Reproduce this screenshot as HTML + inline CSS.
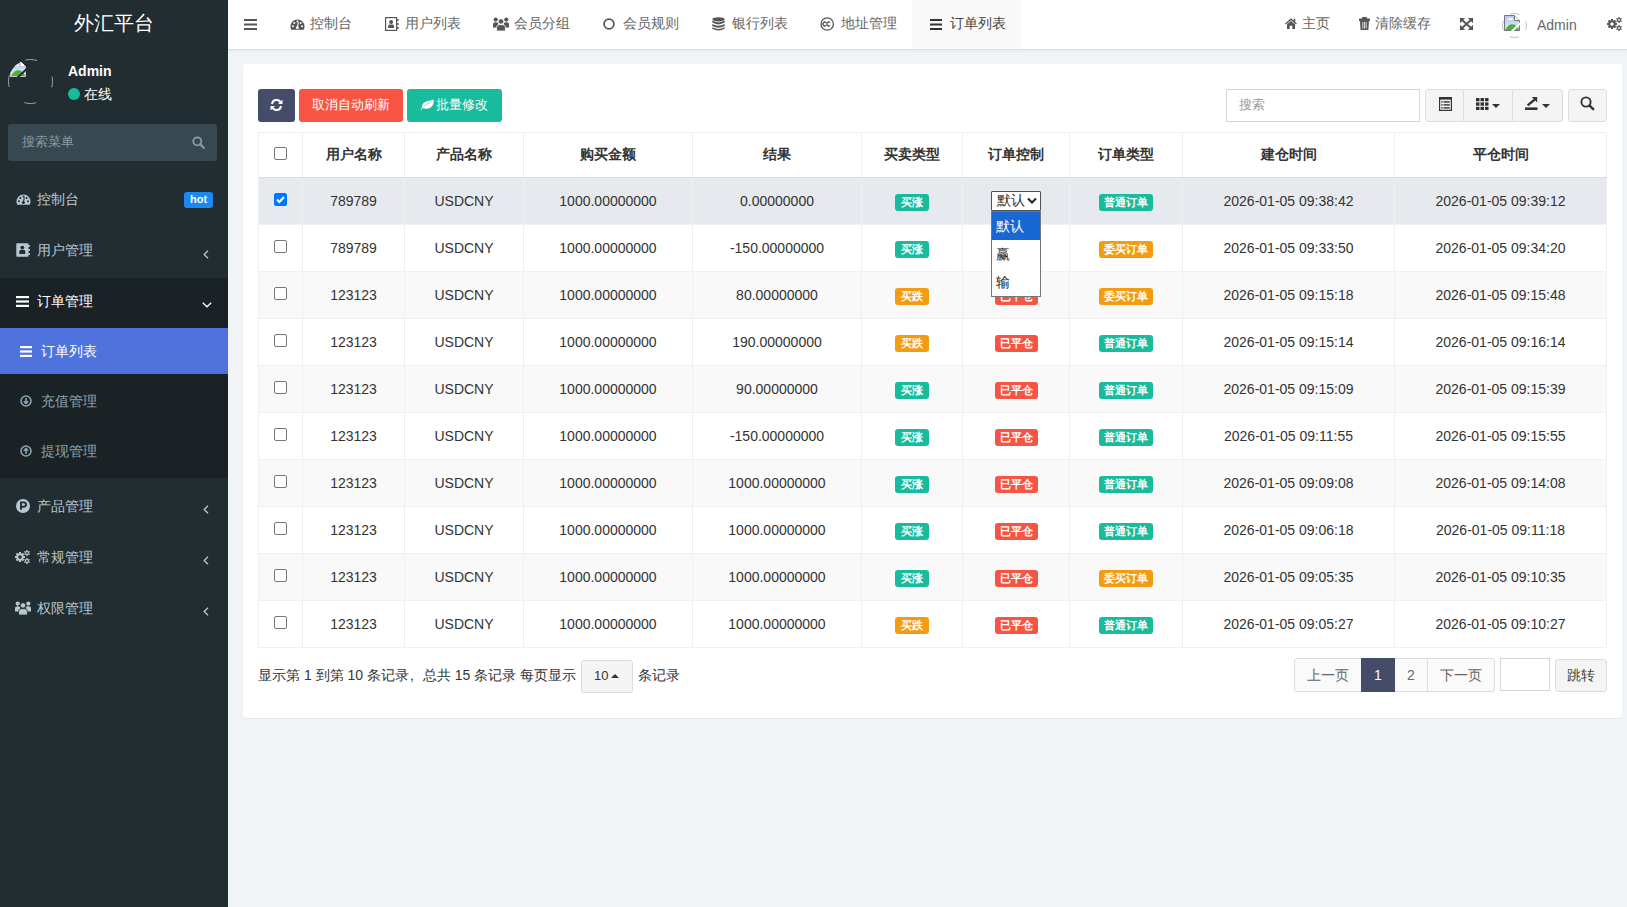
<!DOCTYPE html>
<html><head><meta charset="utf-8">
<style>
*{box-sizing:border-box;margin:0;padding:0}
html,body{width:1627px;height:907px;overflow:hidden}
body{font-family:"Liberation Sans",sans-serif;font-size:14px;color:#333;background:#f1f4f6;position:relative}
.abs{position:absolute}
svg{display:block}
#side{position:absolute;left:0;top:0;width:228px;height:907px;background:#222d32}
#logo{position:absolute;left:0;top:0;width:228px;height:50px;color:#fff;font-size:20px;text-align:center;line-height:46px}
.mi{position:absolute;left:0;width:228px;color:#b8c7ce;font-size:14px}
.ic{position:absolute}
.tx{position:absolute;white-space:nowrap;line-height:20px}
#nav{position:absolute;left:228px;top:0;width:1399px;height:50px;background:#fff;box-shadow:0 1px 3px rgba(0,0,0,.05);border-bottom:1px solid #dcdfe2}
.nt{position:absolute;top:13px;line-height:20px;color:#666;font-size:14px;white-space:nowrap}
#panel{position:absolute;left:243px;top:64px;width:1379px;height:654px;background:#fff;border-radius:3px;box-shadow:0 1px 1px rgba(0,0,0,.05)}
.btn{position:absolute;top:89px;height:33px;border-radius:3px;color:#fff;font-size:13px;line-height:32px;text-align:center;white-space:nowrap}
table{position:absolute;left:258px;top:132px;width:1348px;border-collapse:collapse;table-layout:fixed}
th,td{border:1px solid #f0f0f0;text-align:center;vertical-align:middle;padding:0;white-space:nowrap;color:#333}
th{height:45px;font-weight:bold;border-bottom:1px solid #dcdcdc}
td{height:47px}
tr.sel td{background:#e6e9ed}
tr.odd td{background:#f9f9f9}
.cb{display:inline-block;width:13px;height:13px;border:1px solid #767676;border-radius:2px;background:#fff;vertical-align:middle;position:relative;top:-3px}
.cb.on{background:#0075ff;border-color:#0075ff}
.cb.on svg{position:absolute;left:-1px;top:-1px}
.lb{display:inline-block;height:17px;line-height:17px;border-radius:3px;color:#fff;font-size:11px;font-weight:bold;padding:0 5px;vertical-align:middle;position:relative;top:1px}
.lb.w2{padding:0 6px}
.g{background:#18bc9c}.o{background:#f39c12}.r{background:#f75444}
.selbox{display:inline-block;position:relative;width:50px;height:20px;border:1px solid #4f4f4f;border-radius:1px;background:#fff;text-align:left;padding-left:5px;line-height:16px;font-size:14px;color:#333;vertical-align:middle}
.chev{position:absolute;right:3px;top:5px}
.dd{position:absolute;left:991px;top:211px;width:50px;height:86px;border:1px solid #767676;background:#fff;font-size:14px}
.dd div{height:28px;line-height:28px;padding-left:4px;color:#222}
.dd .hl{background:#1967d2;color:#fff}
.ft{position:absolute;line-height:20px;font-size:14px;color:#333;white-space:nowrap}
.pg{position:absolute;top:658px;height:34px;border:1px solid #ddd;background:#fafafa;color:#666;font-size:14px;line-height:32px;text-align:center}
</style></head><body>
<div id="side">
<div id="logo">外汇平台</div>
<svg class="abs" style="left:8px;top:59px" width="45" height="45" viewBox="0 0 45 45"><circle cx="22.5" cy="22.5" r="22" fill="none" stroke="#9aa3a7" stroke-width="1" stroke-dasharray="12 22.56" stroke-dashoffset="6"/></svg>
<svg class="abs" style="left:10px;top:61px" width="16" height="16" viewBox="0 0 16 16"><defs><linearGradient id="skg" x1="0" y1="0" x2="0" y2="1"><stop offset="0" stop-color="#b3c9ef"/><stop offset="1" stop-color="#e4ebf7"/></linearGradient><clipPath id="cl1"><circle cx="20.5" cy="20.5" r="22"/></clipPath></defs><g clip-path="url(#cl1)"><path d="M0.5 0.5 H10.5 L15.5 5.5 V15.5 H0.5 Z" fill="url(#skg)" stroke="#c9c9c9" stroke-width="1"/><path d="M10.5 0.5 V5.5 H15.5" fill="#fff" stroke="#c9c9c9" stroke-width="1"/><path d="M3 4.8 Q3.2 3.2 5 3.4 Q6 2.2 7.5 3.2 Q9 3.3 9 4.8 Z" fill="#fff"/><path d="M1 15 Q4.5 8.5 9 9.3 Q13 10 15 14.5 L15 15 Z" fill="#4cb03a"/><path d="M6.2 16.5 L16.5 6.8 L16.5 9.6 L9.2 16.5 Z" fill="#222d32"/></g></svg>
<div class="tx" style="left:68px;top:61px;color:#fff;font-weight:bold">Admin</div>
<div class="abs" style="left:68px;top:88px;width:12px;height:12px;border-radius:50%;background:#18bc9c"></div>
<div class="tx" style="left:84px;top:84px;color:#fff">在线</div>
<div class="abs" style="left:8px;top:124px;width:209px;height:37px;background:#374850;border-radius:3px"></div>
<div class="tx" style="left:22px;top:132px;color:#8b9aa1;font-size:13px">搜索菜单</div>
<svg class="abs" style="left:192px;top:136px" width="13" height="13" viewBox="0 0 13 13"><circle cx="5.3" cy="5.3" r="4" fill="none" stroke="#8b9aa1" stroke-width="1.8"/><path d="M8.2 8.2 L11.8 11.8" stroke="#8b9aa1" stroke-width="2.2" stroke-linecap="round"/></svg>

<!-- 控制台 -->
<svg class="ic" style="left:16px;top:194px" width="15" height="11" viewBox="0 0 15 11"><path d="M7.5 0.5 A7 7 0 0 0 0.5 7.5 Q0.5 9.5 1.3 10.8 L13.7 10.8 Q14.5 9.5 14.5 7.5 A7 7 0 0 0 7.5 0.5 Z" fill="#b8c7ce"/><g fill="#222d32"><circle cx="3" cy="7.3" r="1"/><circle cx="4.3" cy="3.9" r="1"/><circle cx="7.5" cy="2.4" r="1"/><circle cx="10.7" cy="3.9" r="1"/><circle cx="12" cy="7.3" r="1"/><circle cx="7.4" cy="8.6" r="1.5"/></g><path d="M7.3 8.5 L8.4 3.4" stroke="#222d32" stroke-width="1.1"/></svg>
<div class="tx mi" style="left:37px;top:189px;width:auto">控制台</div>
<div class="abs" style="left:184px;top:192px;width:29px;height:16px;background:#1a88ef;border-radius:3px;color:#fff;font-size:11px;font-weight:bold;text-align:center;line-height:14px">hot</div>

<!-- 用户管理 -->
<svg class="ic" style="left:16px;top:243px" width="14" height="14" viewBox="0 0 14 14"><rect x="0.3" y="0.3" width="12.2" height="13.4" rx="0.8" fill="#b8c7ce"/><g fill="#b8c7ce"><rect x="12" y="2" width="2" height="1.8"/><rect x="12" y="6.1" width="2" height="1.8"/><rect x="12" y="10.2" width="2" height="1.8"/></g><circle cx="6.3" cy="4.6" r="1.9" fill="#222d32"/><path d="M3.3 11 L3.3 8.4 Q3.3 7 4.8 7 L7.8 7 Q9.3 7 9.3 8.4 L9.3 11 Z" fill="#222d32"/></svg>
<div class="tx mi" style="left:37px;top:240px;width:auto">用户管理</div>
<svg class="ic" style="left:203px;top:250px" width="6" height="9" viewBox="0 0 6 9"><path d="M5 0.8 L1.2 4.5 L5 8.2" fill="none" stroke="#b8c7ce" stroke-width="1.3"/></svg>

<!-- 订单管理 -->
<div class="abs" style="left:0;top:278px;width:228px;height:200px;background:#1a2226"></div>
<svg class="ic" style="left:16px;top:296px" width="13" height="11" viewBox="0 0 13 11"><rect y="0" width="13" height="2.2" fill="#fff"/><rect y="4.4" width="13" height="2.2" fill="#fff"/><rect y="8.8" width="13" height="2.2" fill="#fff"/></svg>
<div class="tx mi" style="left:37px;top:291px;width:auto;color:#fff">订单管理</div>
<svg class="ic" style="left:202px;top:302px" width="10" height="6" viewBox="0 0 10 6"><path d="M0.8 0.8 L5 4.8 L9.2 0.8" fill="none" stroke="#fff" stroke-width="1.3"/></svg>

<div class="abs" style="left:0;top:328px;width:228px;height:46px;background:#4f73dc"></div>
<svg class="ic" style="left:20px;top:346px" width="12" height="11" viewBox="0 0 12 11"><rect y="0" width="12" height="2.2" fill="#fff"/><rect y="4.4" width="12" height="2.2" fill="#fff"/><rect y="8.8" width="12" height="2.2" fill="#fff"/></svg>
<div class="tx mi" style="left:41px;top:341px;width:auto;color:#fff">订单列表</div>

<svg class="ic" style="left:20px;top:395px" width="12" height="12" viewBox="0 0 12 12"><circle cx="6" cy="6" r="5" fill="none" stroke="#8aa4af" stroke-width="1.6"/><path d="M6 3 L6 8.5 M3.8 6.3 L6 8.6 L8.2 6.3" fill="none" stroke="#8aa4af" stroke-width="1.6"/></svg>
<div class="tx mi" style="left:41px;top:391px;width:auto;color:#8aa4af">充值管理</div>
<svg class="ic" style="left:20px;top:445px" width="12" height="12" viewBox="0 0 12 12"><circle cx="6" cy="6" r="5" fill="none" stroke="#8aa4af" stroke-width="1.6"/><path d="M6 9 L6 3.5 M3.8 5.7 L6 3.4 L8.2 5.7" fill="none" stroke="#8aa4af" stroke-width="1.6"/></svg>
<div class="tx mi" style="left:41px;top:441px;width:auto;color:#8aa4af">提现管理</div>

<!-- 产品管理 -->
<svg class="ic" style="left:16px;top:499px" width="14" height="14" viewBox="0 0 14 14"><circle cx="7" cy="7" r="7" fill="#b8c7ce"/><path d="M5 10.8 L5 3.4 L7.6 3.4 Q10 3.4 10 5.6 Q10 7.8 7.6 7.8 L5 7.8" fill="none" stroke="#222d32" stroke-width="1.9"/></svg>
<div class="tx mi" style="left:37px;top:496px;width:auto">产品管理</div>
<svg class="ic" style="left:203px;top:505px" width="6" height="9" viewBox="0 0 6 9"><path d="M5 0.8 L1.2 4.5 L5 8.2" fill="none" stroke="#b8c7ce" stroke-width="1.3"/></svg>

<!-- 常规管理 -->
<svg class="ic" style="left:15px;top:550px" width="16" height="15" viewBox="0 0 16 15"><circle cx="5.00" cy="7.00" r="3.70" fill="#b8c7ce"/><rect x="4.00" y="2.00" width="2.00" height="10.00" fill="#b8c7ce" transform="rotate(0.0 5.00 7.00)"/><rect x="4.00" y="2.00" width="2.00" height="10.00" fill="#b8c7ce" transform="rotate(45.0 5.00 7.00)"/><rect x="4.00" y="2.00" width="2.00" height="10.00" fill="#b8c7ce" transform="rotate(90.0 5.00 7.00)"/><rect x="4.00" y="2.00" width="2.00" height="10.00" fill="#b8c7ce" transform="rotate(135.0 5.00 7.00)"/><circle cx="5.00" cy="7.00" r="1.80" fill="#222d32"/><circle cx="12.00" cy="3.00" r="1.90" fill="#b8c7ce"/><rect x="11.35" y="-0.10" width="1.30" height="6.20" fill="#b8c7ce" transform="rotate(0.0 12.00 3.00)"/><rect x="11.35" y="-0.10" width="1.30" height="6.20" fill="#b8c7ce" transform="rotate(60.0 12.00 3.00)"/><rect x="11.35" y="-0.10" width="1.30" height="6.20" fill="#b8c7ce" transform="rotate(120.0 12.00 3.00)"/><circle cx="12.00" cy="3.00" r="0.90" fill="#222d32"/><circle cx="12.00" cy="11.00" r="1.90" fill="#b8c7ce"/><rect x="11.35" y="7.90" width="1.30" height="6.20" fill="#b8c7ce" transform="rotate(0.0 12.00 11.00)"/><rect x="11.35" y="7.90" width="1.30" height="6.20" fill="#b8c7ce" transform="rotate(60.0 12.00 11.00)"/><rect x="11.35" y="7.90" width="1.30" height="6.20" fill="#b8c7ce" transform="rotate(120.0 12.00 11.00)"/><circle cx="12.00" cy="11.00" r="0.90" fill="#222d32"/></svg>
<div class="tx mi" style="left:37px;top:547px;width:auto">常规管理</div>
<svg class="ic" style="left:203px;top:556px" width="6" height="9" viewBox="0 0 6 9"><path d="M5 0.8 L1.2 4.5 L5 8.2" fill="none" stroke="#b8c7ce" stroke-width="1.3"/></svg>

<!-- 权限管理 -->
<svg class="ic" style="left:15px;top:601px" width="16" height="14" viewBox="0 0 16 14"><g fill="#b8c7ce"><circle cx="2.7" cy="2.6" r="2.1"/><circle cx="13.3" cy="2.6" r="2.1"/><path d="M0 10.5 L0 7.6 Q0 5.3 2.7 5.3 Q4.3 5.3 5.2 6.3 L5.2 10.5 Z"/><path d="M16 10.5 L16 7.6 Q16 5.3 13.3 5.3 Q11.7 5.3 10.8 6.3 L10.8 10.5 Z"/><circle cx="8" cy="4.4" r="2.7" stroke="#222d32" stroke-width=".8"/><path d="M3.6 14 L3.6 10.4 Q3.6 7.7 6.3 7.7 L9.7 7.7 Q12.4 7.7 12.4 10.4 L12.4 14 Z" stroke="#222d32" stroke-width=".8"/></g></svg>
<div class="tx mi" style="left:37px;top:598px;width:auto">权限管理</div>
<svg class="ic" style="left:203px;top:607px" width="6" height="9" viewBox="0 0 6 9"><path d="M5 0.8 L1.2 4.5 L5 8.2" fill="none" stroke="#b8c7ce" stroke-width="1.3"/></svg>
</div>
<div id="nav"></div>
<div class="abs" style="left:912px;top:0;width:109px;height:49px;background:#f9f9f9"></div>
<!-- hamburger -->
<svg class="abs" style="left:244px;top:19px" width="13" height="11" viewBox="0 0 13 11"><g fill="#555"><rect width="13" height="2"/><rect y="4.5" width="13" height="2"/><rect y="9" width="13" height="2"/></g></svg>
<!-- 控制台 -->
<svg class="abs" style="left:290px;top:19px" width="15" height="11" viewBox="0 0 15 11"><path d="M7.5 0.5 A7 7 0 0 0 0.5 7.5 Q0.5 9.5 1.3 10.8 L13.7 10.8 Q14.5 9.5 14.5 7.5 A7 7 0 0 0 7.5 0.5 Z" fill="#555"/><g fill="#fff"><circle cx="3" cy="7.3" r="1"/><circle cx="4.3" cy="3.9" r="1"/><circle cx="7.5" cy="2.4" r="1"/><circle cx="10.7" cy="3.9" r="1"/><circle cx="12" cy="7.3" r="1"/><circle cx="7.4" cy="8.6" r="1.5"/></g><path d="M7.3 8.5 L8.4 3.4" stroke="#fff" stroke-width="1.1"/></svg>
<div class="nt" style="left:310px">控制台</div>
<!-- 用户列表 -->
<svg class="abs" style="left:385px;top:17px" width="14" height="14" viewBox="0 0 14 14"><rect x="0.6" y="0.6" width="11" height="12.8" fill="none" stroke="#555" stroke-width="1.2"/><g fill="#555"><rect x="11.6" y="2.2" width="2" height="1.8"/><rect x="11.6" y="6.1" width="2" height="1.8"/><rect x="11.6" y="10" width="2" height="1.8"/></g><circle cx="6.1" cy="4.9" r="2" fill="#555"/><path d="M3.1 11 L3.1 9 Q3.1 7.4 4.6 7.4 L7.6 7.4 Q9.1 7.4 9.1 9 L9.1 11 Z" fill="#555"/></svg>
<div class="nt" style="left:405px">用户列表</div>
<!-- 会员分组 -->
<svg class="abs" style="left:493px;top:17px" width="16" height="14" viewBox="0 0 16 14"><g fill="#555"><circle cx="2.7" cy="2.6" r="2.1"/><circle cx="13.3" cy="2.6" r="2.1"/><path d="M0 10.5 L0 7.6 Q0 5.3 2.7 5.3 Q4.3 5.3 5.2 6.3 L5.2 10.5 Z"/><path d="M16 10.5 L16 7.6 Q16 5.3 13.3 5.3 Q11.7 5.3 10.8 6.3 L10.8 10.5 Z"/><circle cx="8" cy="4.4" r="2.7" stroke="#fff" stroke-width=".8"/><path d="M3.6 14 L3.6 10.4 Q3.6 7.7 6.3 7.7 L9.7 7.7 Q12.4 7.7 12.4 10.4 L12.4 14 Z" stroke="#fff" stroke-width=".8"/></g></svg>
<div class="nt" style="left:514px">会员分组</div>
<!-- 会员规则 -->
<svg class="abs" style="left:603px;top:18px" width="12" height="12" viewBox="0 0 12 12"><circle cx="6" cy="6" r="4.9" fill="none" stroke="#555" stroke-width="1.8"/></svg>
<div class="nt" style="left:623px">会员规则</div>
<!-- 银行列表 -->
<svg class="abs" style="left:712px;top:17px" width="13" height="14" viewBox="0 0 13 14"><g fill="#555"><ellipse cx="6.5" cy="2.3" rx="6.2" ry="2.1"/><path d="M0.3 3.6 Q6.5 7.2 12.7 3.6 L12.7 5.6 Q6.5 9.2 0.3 5.6 Z"/><path d="M0.3 6.9 Q6.5 10.5 12.7 6.9 L12.7 8.9 Q6.5 12.5 0.3 8.9 Z"/><path d="M0.3 10.2 Q6.5 13.8 12.7 10.2 L12.7 11.7 Q6.5 15.3 0.3 11.7 Z"/></g></svg>
<div class="nt" style="left:732px">银行列表</div>
<!-- 地址管理 -->
<svg class="abs" style="left:820px;top:17px" width="15" height="14" viewBox="0 0 15 14"><circle cx="7.2" cy="7" r="6.2" fill="none" stroke="#555" stroke-width="1.3"/><path d="M6.1 5.6 A1.9 1.9 0 1 0 6.1 8.4 M9.9 5.6 A1.9 1.9 0 1 0 9.9 8.4" fill="none" stroke="#555" stroke-width="1.3"/></svg>
<div class="nt" style="left:841px">地址管理</div>
<!-- 订单列表 -->
<svg class="abs" style="left:930px;top:19px" width="12" height="11" viewBox="0 0 12 11"><g fill="#333"><rect width="12" height="2"/><rect y="4.5" width="12" height="2"/><rect y="9" width="12" height="2"/></g></svg>
<div class="nt" style="left:950px;color:#444">订单列表</div>
<!-- right -->
<svg class="abs" style="left:1285px;top:18px" width="12" height="11" viewBox="0 0 12 11"><path d="M0.6 6 L6 1.2 L11.4 6" fill="none" stroke="#555" stroke-width="1.5"/><path d="M2 6.4 L6 3 L10 6.4 L10 11 L7.3 11 L7.3 7.8 L4.7 7.8 L4.7 11 L2 11 Z" fill="#555"/><rect x="8.6" y="0.8" width="1.7" height="3" fill="#555"/></svg>
<div class="nt" style="left:1302px">主页</div>
<svg class="abs" style="left:1359px;top:17px" width="11" height="13" viewBox="0 0 11 13"><path d="M0 2 L11 2 L11 3.4 L0 3.4 Z M3.5 2 L3.5 0.5 L7.5 0.5 L7.5 2" fill="#555" stroke="#555" stroke-width="1"/><path d="M1 3.4 L10 3.4 L9.4 13 L1.6 13 Z" fill="#555"/><path d="M3.8 5 L3.8 11.5 M5.5 5 L5.5 11.5 M7.2 5 L7.2 11.5" stroke="#fff" stroke-width=".8"/></svg>
<div class="nt" style="left:1375px">清除缓存</div>
<svg class="abs" style="left:1460px;top:18px" width="13" height="12" viewBox="0 0 13 12"><g fill="#555"><path d="M0 0 L5.2 0 L0 5.2 Z M13 0 L7.8 0 L13 5.2 Z M0 12 L5.2 12 L0 6.8 Z M13 12 L7.8 12 L13 6.8 Z"/></g><path d="M1.5 1.5 L11.5 10.5 M11.5 1.5 L1.5 10.5" stroke="#555" stroke-width="1.8"/></svg>
<svg class="abs" style="left:1502px;top:13px" width="25" height="25" viewBox="0 0 25 25"><circle cx="12.5" cy="12.5" r="12" fill="none" stroke="#bbb" stroke-width="1" stroke-dasharray="9 9.85" stroke-dashoffset="4.5"/></svg>
<svg class="abs" style="left:1504px;top:15px" width="16" height="16" viewBox="0 0 16 16"><path d="M0.5 0.5 H10.5 L15.5 5.5 V15.5 H0.5 Z" fill="url(#skg)" stroke="#777" stroke-width="1"/><path d="M10.5 0.5 V5.5 H15.5" fill="#fff" stroke="#777" stroke-width="1"/><path d="M3 4.8 Q3.2 3.2 5 3.4 Q6 2.2 7.5 3.2 Q9 3.3 9 4.8 Z" fill="#fff"/><path d="M1 15 Q4.5 8.5 9 9.3 Q13 10 15 14.5 L15 15 Z" fill="#4cb03a"/><path d="M6.2 16.5 L16.5 6.8 L16.5 9.6 L9.2 16.5 Z" fill="#fff"/></svg>
<div class="nt" style="left:1537px;top:15px">Admin</div>
<svg class="abs" style="left:1607px;top:17px" width="16" height="15" viewBox="0 0 16 15"><circle cx="5.00" cy="7.00" r="3.70" fill="#555"/><rect x="4.00" y="2.00" width="2.00" height="10.00" fill="#555" transform="rotate(0.0 5.00 7.00)"/><rect x="4.00" y="2.00" width="2.00" height="10.00" fill="#555" transform="rotate(45.0 5.00 7.00)"/><rect x="4.00" y="2.00" width="2.00" height="10.00" fill="#555" transform="rotate(90.0 5.00 7.00)"/><rect x="4.00" y="2.00" width="2.00" height="10.00" fill="#555" transform="rotate(135.0 5.00 7.00)"/><circle cx="5.00" cy="7.00" r="1.80" fill="#fff"/><circle cx="12.00" cy="3.00" r="1.90" fill="#555"/><rect x="11.35" y="-0.10" width="1.30" height="6.20" fill="#555" transform="rotate(0.0 12.00 3.00)"/><rect x="11.35" y="-0.10" width="1.30" height="6.20" fill="#555" transform="rotate(60.0 12.00 3.00)"/><rect x="11.35" y="-0.10" width="1.30" height="6.20" fill="#555" transform="rotate(120.0 12.00 3.00)"/><circle cx="12.00" cy="3.00" r="0.90" fill="#fff"/><circle cx="12.00" cy="11.00" r="1.90" fill="#555"/><rect x="11.35" y="7.90" width="1.30" height="6.20" fill="#555" transform="rotate(0.0 12.00 11.00)"/><rect x="11.35" y="7.90" width="1.30" height="6.20" fill="#555" transform="rotate(60.0 12.00 11.00)"/><rect x="11.35" y="7.90" width="1.30" height="6.20" fill="#555" transform="rotate(120.0 12.00 11.00)"/><circle cx="12.00" cy="11.00" r="0.90" fill="#fff"/></svg>
<div id="panel"></div>
<div class="btn" style="left:258px;width:37px;background:#444c69"><svg style="position:absolute;left:12px;top:10px" width="13" height="12" viewBox="0 0 13 12"><path d="M2 5 A4.6 4.6 0 0 1 10.5 3.2" fill="none" stroke="#fff" stroke-width="2"/><path d="M12.5 0.5 L12.5 5 L8 5 Z" fill="#fff"/><path d="M11 7 A4.6 4.6 0 0 1 2.5 8.8" fill="none" stroke="#fff" stroke-width="2"/><path d="M0.5 11.5 L0.5 7 L5 7 Z" fill="#fff"/></svg></div>
<div class="btn" style="left:299px;width:104px;background:#f75444">取消自动刷新</div>
<div class="btn" style="left:407px;width:95px;background:#18bc9c;padding-left:14px"><svg style="position:absolute;left:13px;top:10px" width="14" height="11" viewBox="0 0 14 11"><path d="M0.3 10.3 L2.2 8.7 Q1.3 5.2 4.6 3.3 Q7.5 1.9 10.5 1.6 Q12.6 1.3 13.6 0.3 Q14.2 4.6 12.1 7.2 Q9.6 10 5.6 9.8 Q3.6 9.7 2.7 9.1 L1.1 10.8 Z" fill="#fff"/><path d="M3.6 7.6 Q6 5.2 9.6 4" fill="none" stroke="#18bc9c" stroke-width=".7" opacity=".7"/></svg>批量修改</div>
<div class="abs" style="left:1226px;top:89px;width:194px;height:33px;border:1px solid #d2d6de;background:#fff"></div>
<div class="ft" style="left:1239px;top:95px;color:#999;font-size:13px">搜索</div>
<div class="abs" style="left:1425px;top:89px;width:138px;height:33px;border:1px solid #ddd;border-radius:3px;background:#f4f4f4"></div>
<div class="abs" style="left:1463px;top:89px;width:1px;height:33px;background:#ddd"></div>
<div class="abs" style="left:1512px;top:89px;width:1px;height:33px;background:#ddd"></div>
<svg class="abs" style="left:1439px;top:97px" width="13" height="14" viewBox="0 0 13 14"><rect x="0.6" y="0.6" width="11.8" height="12.8" fill="none" stroke="#333" stroke-width="1.2"/><rect x="0.6" y="0.6" width="11.8" height="2" fill="#333"/><g fill="#333"><rect x="2.2" y="4.2" width="1.4" height="1.4"/><rect x="2.2" y="7.2" width="1.4" height="1.4"/><rect x="2.2" y="10.2" width="1.4" height="1.4"/><rect x="4.5" y="4.2" width="6.3" height="1.4"/><rect x="4.5" y="7.2" width="6.3" height="1.4"/><rect x="4.5" y="10.2" width="6.3" height="1.4"/></g></svg>
<svg class="abs" style="left:1475.5px;top:98px" width="13" height="12" viewBox="0 0 13 12"><g fill="#333"><rect x="0.0" y="0.0" width="3.5" height="3.3"/><rect x="0.0" y="4.4" width="3.5" height="3.3"/><rect x="0.0" y="8.8" width="3.5" height="3.3"/><rect x="4.5" y="0.0" width="3.5" height="3.3"/><rect x="4.5" y="4.4" width="3.5" height="3.3"/><rect x="4.5" y="8.8" width="3.5" height="3.3"/><rect x="9.0" y="0.0" width="3.5" height="3.3"/><rect x="9.0" y="4.4" width="3.5" height="3.3"/><rect x="9.0" y="8.8" width="3.5" height="3.3"/></g></svg>
<svg class="abs" style="left:1492px;top:104px" width="8" height="4" viewBox="0 0 8 4"><path d="M0 0 L8 0 L4 4 Z" fill="#333"/></svg>
<svg class="abs" style="left:1525px;top:97px" width="13" height="13" viewBox="0 0 13 13"><g fill="#333"><rect x="0" y="10.4" width="12.5" height="2.6"/><path d="M6.8 0 L12.2 0 L12.2 5.4 Z"/></g><path d="M2.6 8.4 L9.6 2.6" stroke="#333" stroke-width="2.4"/></svg>
<svg class="abs" style="left:1542px;top:104px" width="8" height="4" viewBox="0 0 8 4"><path d="M0 0 L8 0 L4 4 Z" fill="#333"/></svg>
<div class="abs" style="left:1568px;top:89px;width:39px;height:33px;border:1px solid #ddd;border-radius:3px;background:#f4f4f4"></div>
<svg class="abs" style="left:1580px;top:96px" width="15" height="15" viewBox="0 0 15 15"><circle cx="6" cy="6" r="4.6" fill="none" stroke="#333" stroke-width="1.9"/><path d="M9.4 9.4 L13.2 13.2" stroke="#333" stroke-width="2.4" stroke-linecap="round"/></svg>
<table><colgroup><col style="width:44px"><col style="width:102px"><col style="width:119px"><col style="width:169px"><col style="width:169px"><col style="width:101px"><col style="width:107px"><col style="width:113px"><col style="width:212px"><col style="width:212px"></colgroup><thead><tr><th><div class="cb"></div></th><th>用户名称</th><th>产品名称</th><th>购买金额</th><th>结果</th><th>买卖类型</th><th>订单控制</th><th>订单类型</th><th>建仓时间</th><th>平仓时间</th></tr></thead><tbody><tr class="sel"><td><div class="cb on"><svg width="13" height="13" viewBox="0 0 13 13"><path d="M3 6.6 L5.4 9 L10 4" fill="none" stroke="#fff" stroke-width="2.2"/></svg></div></td><td>789789</td><td>USDCNY</td><td>1000.00000000</td><td>0.00000000</td><td><span class="lb w2 g">买涨</span></td><td><div class="selbox">默认<svg class="chev" width="10" height="7" viewBox="0 0 10 7"><path d="M1 1.5 L5 5.5 L9 1.5" fill="none" stroke="#222" stroke-width="2"/></svg></div></td><td><span class="lb g">普通订单</span></td><td>2026-01-05 09:38:42</td><td>2026-01-05 09:39:12</td></tr><tr class=""><td><div class="cb"></div></td><td>789789</td><td>USDCNY</td><td>1000.00000000</td><td>-150.00000000</td><td><span class="lb w2 g">买涨</span></td><td><span class="lb r">已平仓</span></td><td><span class="lb o">委买订单</span></td><td>2026-01-05 09:33:50</td><td>2026-01-05 09:34:20</td></tr><tr class="odd"><td><div class="cb"></div></td><td>123123</td><td>USDCNY</td><td>1000.00000000</td><td>80.00000000</td><td><span class="lb w2 o">买跌</span></td><td><span class="lb r">已平仓</span></td><td><span class="lb o">委买订单</span></td><td>2026-01-05 09:15:18</td><td>2026-01-05 09:15:48</td></tr><tr class=""><td><div class="cb"></div></td><td>123123</td><td>USDCNY</td><td>1000.00000000</td><td>190.00000000</td><td><span class="lb w2 o">买跌</span></td><td><span class="lb r">已平仓</span></td><td><span class="lb g">普通订单</span></td><td>2026-01-05 09:15:14</td><td>2026-01-05 09:16:14</td></tr><tr class="odd"><td><div class="cb"></div></td><td>123123</td><td>USDCNY</td><td>1000.00000000</td><td>90.00000000</td><td><span class="lb w2 g">买涨</span></td><td><span class="lb r">已平仓</span></td><td><span class="lb g">普通订单</span></td><td>2026-01-05 09:15:09</td><td>2026-01-05 09:15:39</td></tr><tr class=""><td><div class="cb"></div></td><td>123123</td><td>USDCNY</td><td>1000.00000000</td><td>-150.00000000</td><td><span class="lb w2 g">买涨</span></td><td><span class="lb r">已平仓</span></td><td><span class="lb g">普通订单</span></td><td>2026-01-05 09:11:55</td><td>2026-01-05 09:15:55</td></tr><tr class="odd"><td><div class="cb"></div></td><td>123123</td><td>USDCNY</td><td>1000.00000000</td><td>1000.00000000</td><td><span class="lb w2 g">买涨</span></td><td><span class="lb r">已平仓</span></td><td><span class="lb g">普通订单</span></td><td>2026-01-05 09:09:08</td><td>2026-01-05 09:14:08</td></tr><tr class=""><td><div class="cb"></div></td><td>123123</td><td>USDCNY</td><td>1000.00000000</td><td>1000.00000000</td><td><span class="lb w2 g">买涨</span></td><td><span class="lb r">已平仓</span></td><td><span class="lb g">普通订单</span></td><td>2026-01-05 09:06:18</td><td>2026-01-05 09:11:18</td></tr><tr class="odd"><td><div class="cb"></div></td><td>123123</td><td>USDCNY</td><td>1000.00000000</td><td>1000.00000000</td><td><span class="lb w2 g">买涨</span></td><td><span class="lb r">已平仓</span></td><td><span class="lb o">委买订单</span></td><td>2026-01-05 09:05:35</td><td>2026-01-05 09:10:35</td></tr><tr class=""><td><div class="cb"></div></td><td>123123</td><td>USDCNY</td><td>1000.00000000</td><td>1000.00000000</td><td><span class="lb w2 o">买跌</span></td><td><span class="lb r">已平仓</span></td><td><span class="lb g">普通订单</span></td><td>2026-01-05 09:05:27</td><td>2026-01-05 09:10:27</td></tr></tbody></table>
<div class="dd"><div class="hl">默认</div><div>赢</div><div>输</div></div>
<div class="ft" style="left:258px;top:665px">显示第 1 到第 10 条记录<span style="display:inline-block;width:14px;text-align:left;padding-left:1px">,</span>总共 15 条记录 每页显示</div>
<div class="abs" style="left:581px;top:660px;width:52px;height:33px;border:1px solid #ddd;border-radius:3px;background:#f4f4f4"></div>
<div class="ft" style="left:594px;top:666px;font-size:13px">10</div>
<svg class="abs" style="left:611px;top:674px" width="8" height="4" viewBox="0 0 8 4"><path d="M0 4 L8 4 L4 0 Z" fill="#333"/></svg>
<div class="ft" style="left:638px;top:665px">条记录</div>
<div class="pg" style="left:1294px;width:68px;border-radius:3px 0 0 3px">上一页</div>
<div class="pg" style="left:1361px;width:34px;z-index:2;background:#444c69;border-color:#444c69;color:#fff">1</div>
<div class="pg" style="left:1394px;width:34px">2</div>
<div class="pg" style="left:1427px;width:68px;border-radius:0 3px 3px 0">下一页</div>
<div class="abs" style="left:1500px;top:658px;width:50px;height:33px;border:1px solid #d2d6de;background:#fff"></div>
<div class="pg" style="left:1555px;top:659px;width:52px;height:33px;background:#f4f4f4;border-radius:3px;color:#444;line-height:31px">跳转</div>
</body></html>
